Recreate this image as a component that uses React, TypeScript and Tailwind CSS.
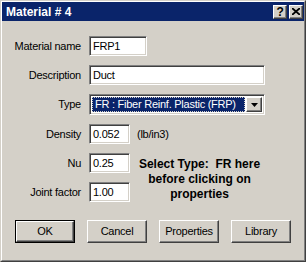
import React from 'react';

const sunken =
  'border border-t-[#808080] border-l-[#808080] border-r-white border-b-white shadow-[inset_1px_1px_0_#404040,inset_-1px_-1px_0_#d4d0c8]';
const raised =
  'border border-t-white border-l-white border-r-[#404040] border-b-[#404040] shadow-[inset_-1px_-1px_0_#808080,inset_1px_1px_0_#d4d0c8]';

function TextBox({ value, width }: { value: string; width: string }) {
  return (
    <div className={`${sunken} ${width} h-[20px] bg-white flex items-center pl-[3px] text-black`}>
      {value}
    </div>
  );
}

function Label({ children }: { children: React.ReactNode }) {
  return <div className="text-right text-black self-center">{children}</div>;
}

function DlgButton({ label, isDefault }: { label: string; isDefault?: boolean }) {
  return (
    <div className={`w-[60px] h-[23px] ${isDefault ? 'border border-black' : ''}`}>
      <div className={`${raised} w-full h-full flex items-center justify-center text-black`}>{label}</div>
    </div>
  );
}

function CaptionButton({ children }: { children: React.ReactNode }) {
  return (
    <div className={`${raised} w-[14px] h-[14px] bg-[#d4d0c8] flex items-center justify-center text-black text-[12px] font-bold leading-none`}>
      {children}
    </div>
  );
}

export default function App() {
  return (
    <div className="w-[306px] h-[262px] bg-[#d4d0c8] border border-t-[#d4d0c8] border-l-[#d4d0c8] border-r-[#404040] border-b-[#404040] font-['Liberation_Sans',Arial,sans-serif] text-[11px] tracking-[-0.25px]">
      <div className="h-full border border-t-white border-l-white border-r-[#808080] border-b-[#808080] flex flex-col">
        <div className="h-[19px] bg-[#0a246a] flex items-center pl-[4px] pr-[1px]">
          <span className="text-white font-bold text-[12px] tracking-normal flex-1">Material # 4</span>
          <div className="flex gap-[2px]">
            <CaptionButton>?</CaptionButton>
            <CaptionButton>
              <svg width="8" height="7" viewBox="0 0 8 7">
                <path d="M0 0 L8 7 M8 0 L0 7" stroke="black" strokeWidth="1.8" />
              </svg>
            </CaptionButton>
          </div>
        </div>

        <div className="pt-[15px] grid grid-cols-[79px_41px_127px] gap-x-[8px] gap-y-[9px]">
          <Label>Material name</Label>
          <div className="col-span-2">
            <TextBox value="FRP1" width="w-[58px]" />
          </div>

          <Label>Description</Label>
          <div className="col-span-2">
            <TextBox value="Duct" width="w-[176px]" />
          </div>

          <Label>Type</Label>
          <div className="col-span-2">
            <div className={`${sunken} w-[176px] h-[21px] bg-white flex items-center p-[2px] gap-[1px]`}>
              <div className="flex-1 h-full bg-[#0a246a] border border-dotted border-[#d4d0c8] flex items-center pl-[2px] text-white whitespace-nowrap overflow-hidden">
                FR : Fiber Reinf. Plastic (FRP)
              </div>
              <div className={`${raised} w-[16px] h-full bg-[#d4d0c8] flex items-center justify-center`}>
                <svg width="7" height="4" viewBox="0 0 7 4">
                  <path d="M0 0 H7 L3.5 4 Z" fill="black" />
                </svg>
              </div>
            </div>
          </div>

          <Label>Density</Label>
          <TextBox value="0.052" width="w-[41px]" />
          <div className="self-center text-black -ml-[1px]">(lb/in3)</div>

          <Label>Nu</Label>
          <TextBox value="0.25" width="w-[41px]" />
          <div className="row-span-2 self-start mt-[4px] -ml-[4px] text-center font-bold text-[12px] leading-[15px] text-black tracking-normal whitespace-nowrap">
            Select Type:&nbsp; FR here
            <br />
            before clicking on
            <br />
            properties
          </div>

          <Label>Joint factor</Label>
          <TextBox value="1.00" width="w-[41px]" />
        </div>

        <div className="mt-[18px] pl-[13px] flex gap-[12px]">
          <DlgButton label="OK" isDefault />
          <DlgButton label="Cancel" />
          <DlgButton label="Properties" />
          <DlgButton label="Library" />
        </div>
      </div>
    </div>
  );
}
